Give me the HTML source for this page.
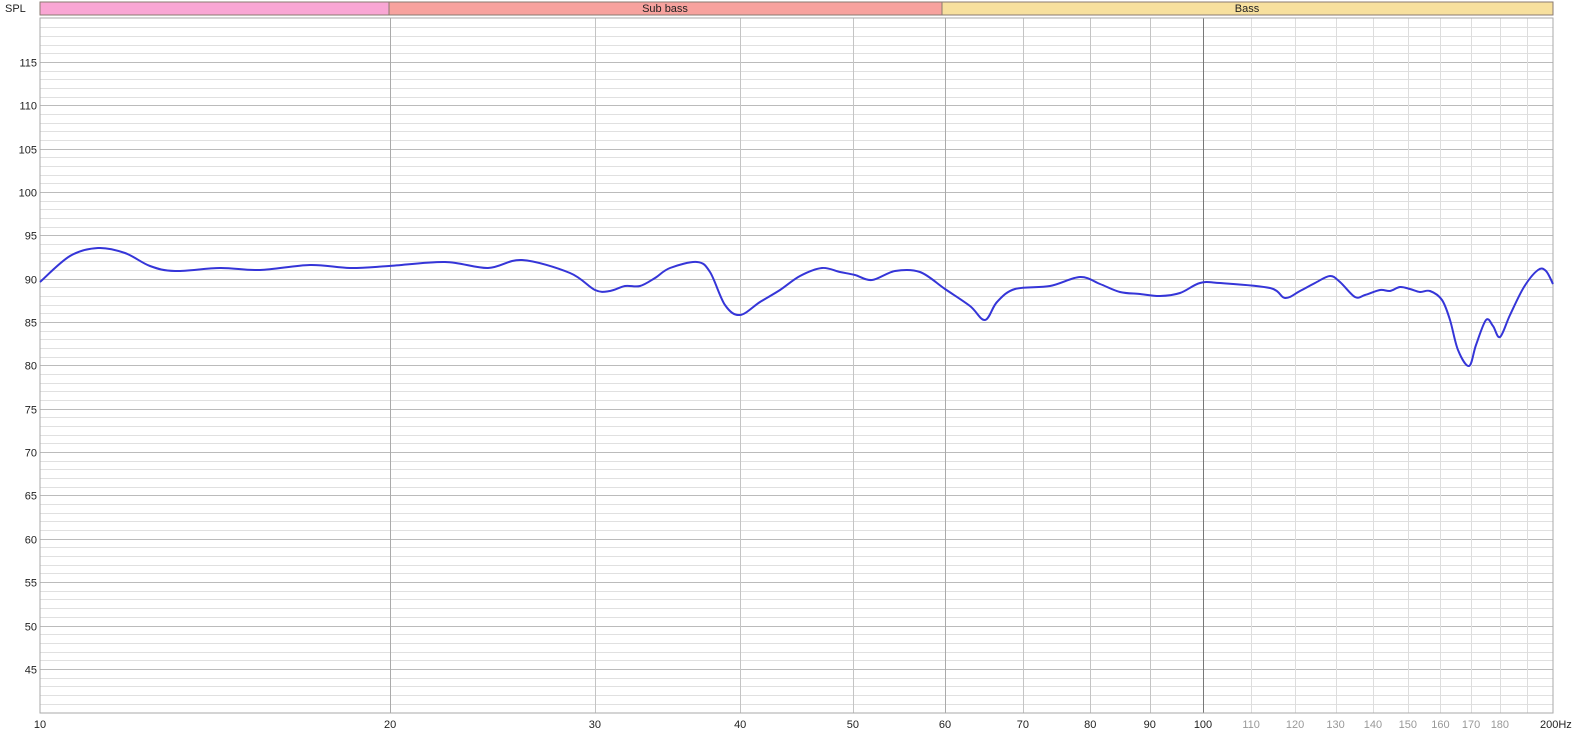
<!DOCTYPE html>
<html><head><meta charset="utf-8"><style>
html,body{margin:0;padding:0;background:#fff;width:1573px;height:738px;overflow:hidden}
svg{display:block}
text{font-family:"Liberation Sans",sans-serif;font-size:11px;fill:#222}
</style></head><body>
<svg id="s" width="1573" height="738" xmlns="http://www.w3.org/2000/svg">
<rect x="40" y="2" width="349" height="13" fill="#f9a6d4" stroke="#8a7a70" stroke-width="1"/>
<rect x="389" y="2" width="553" height="13" fill="#f7a29e" stroke="#8a7a70" stroke-width="1"/>
<rect x="942" y="2" width="611" height="13" fill="#f7e09e" stroke="#8a7a70" stroke-width="1"/>
<text x="5" y="12">SPL</text>
<text x="665" y="12" text-anchor="middle" font-size="10">Sub bass</text>
<text x="1247" y="12" text-anchor="middle" font-size="10">Bass</text>
<g id="grid"></g>
<rect x="40" y="18" width="1513" height="695" fill="none" stroke="#aaa"/>
<path id="c" fill="none" stroke="#3535d8" stroke-width="2" stroke-linejoin="round"/>
<g id="lab"></g>
</svg>
<script>
var g=document.getElementById('grid'),lab=document.getElementById('lab'),NS='http://www.w3.org/2000/svg';
function ln(x1,y1,x2,y2,c){var l=document.createElementNS(NS,'line');l.setAttribute('x1',x1);l.setAttribute('y1',y1);l.setAttribute('x2',x2);l.setAttribute('y2',y2);l.setAttribute('stroke',c);g.appendChild(l);}
function tx(x,y,s,a,c){var t=document.createElementNS(NS,'text');t.setAttribute('x',x);t.setAttribute('y',y);t.textContent=s;t.setAttribute('text-anchor',a);if(c)t.setAttribute('style','fill:'+c);lab.appendChild(t);}
function Y(d){return 18.6+(120-d)*8.67;}
function X(f){return 40+1163*Math.log10(f/10);}
for(var d=41;d<120;d++){var y=Math.round(Y(d))+0.5;ln(40,y,1553,y,d%5==0?'#bbb':'#e0e0e0');if(d%5==0&&d>=45)tx(37,y+4,d,'end');}
var fs=[20,30,40,50,60,70,80,90,100,110,120,130,140,150,160,170,180,190];
fs.forEach(function(f){var x=Math.round(X(f))+0.5;var c=f==100?'#777':(f==20||f==60)?'#aaa':f>100?'#ddd':'#c4c4c4';ln(x,18,x,713,c);});
[10,20,30,40,50,60,70,80,90,100].forEach(function(f){tx(X(f),728,f,'middle');});
[110,120,130,140,150,160,170,180].forEach(function(f){tx(X(f),728,f,'middle','#999');});
tx(1540,728,'200Hz','start');
var p=[[40,282],[70,256],[98,248],[125,253],[150,266],[175,271],[220,268],[260,270],[310,265],[350,268],[389,266],[445,262],[488,268],[522,260],[570,273],[595,290],[610,291],[625,286],[640,286],[655,278],[670,268],[697,262],[710,272],[725,305],[740,315],[760,302],[780,290],[800,276],[822,268],[840,272],[855,275],[872,280],[895,271],[920,272],[945,289],[970,306],[985,320],[997,302],[1015,289],[1050,286],[1080,277],[1100,284],[1120,292],[1140,294],[1160,296],[1180,293],[1200,283],[1220,283],[1270,288],[1285,298],[1300,291],[1315,283],[1330,276],[1340,282],[1355,297],[1365,295],[1380,290],[1390,291],[1400,287],[1410,289],[1420,292],[1430,291],[1442,300],[1450,320],[1458,350],[1469,366],[1476,345],[1486,320],[1493,326],[1500,337],[1510,315],[1524,287],[1538,270],[1546,271],[1553,284]];
var s='M'+p[0][0]+' '+p[0][1];
for(var i=0;i<p.length-1;i++){var a=p[i-1]||p[i],b=p[i],c=p[i+1],e=p[i+2]||c;
s+=' C'+(b[0]+(c[0]-a[0])/6)+' '+(b[1]+(c[1]-a[1])/6)+' '+(c[0]-(e[0]-b[0])/6)+' '+(c[1]-(e[1]-b[1])/6)+' '+c[0]+' '+c[1];}
document.getElementById('c').setAttribute('d',s);
</script>
</body></html>
